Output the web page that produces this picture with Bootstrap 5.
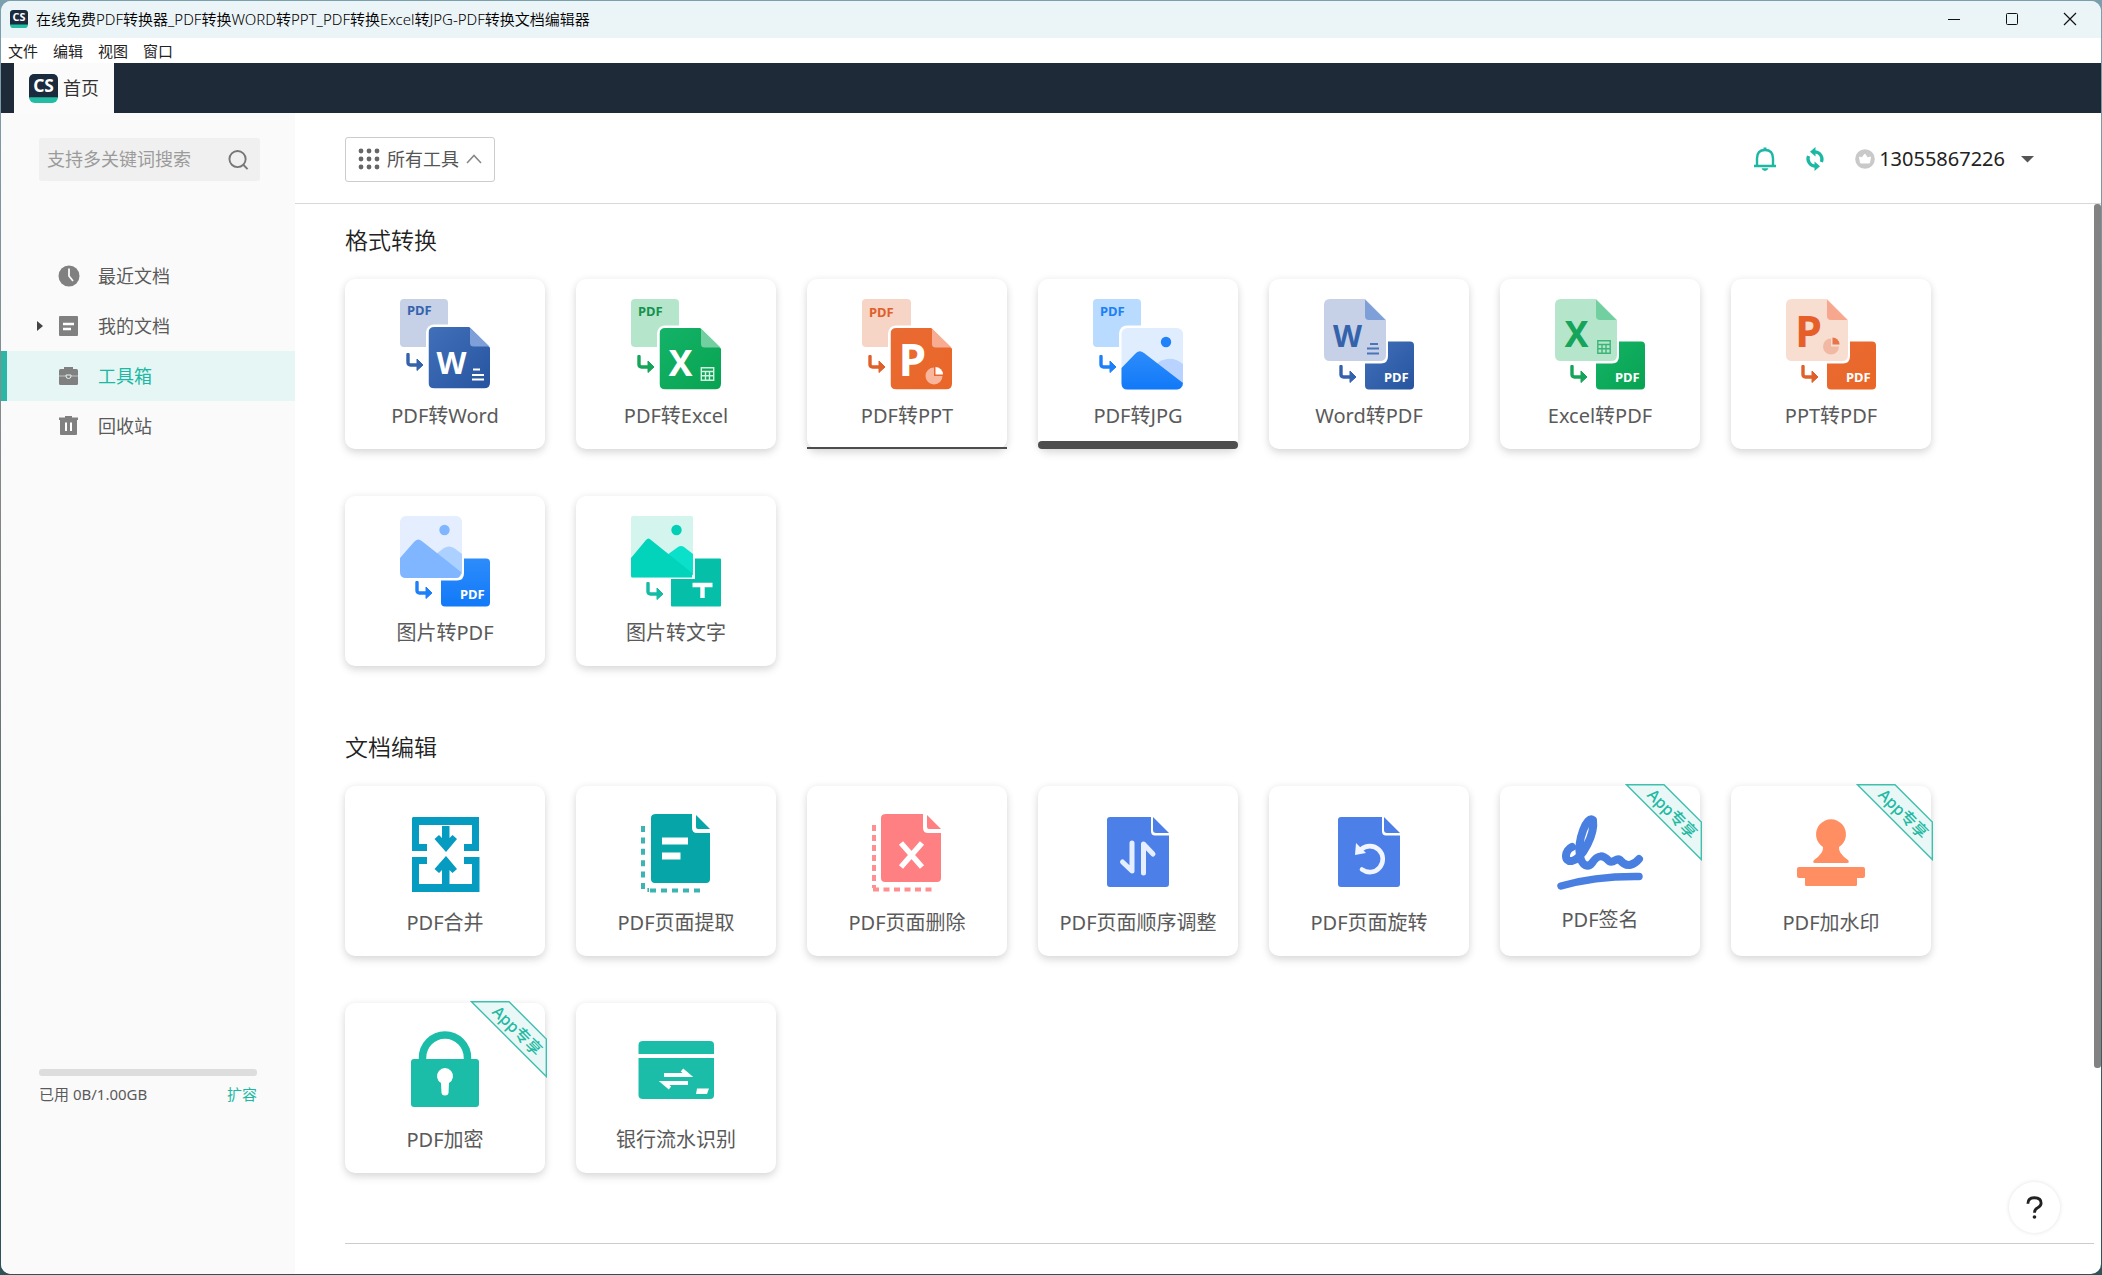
<!DOCTYPE html>
<html lang="zh-CN">
<head>
<meta charset="utf-8">
<meta name="viewport" content="width=device-width, initial-scale=1">
<title>在线免费PDF转换器</title>
<link href="https://cdn.jsdelivr.net/npm/bootstrap@5.3.0/dist/css/bootstrap.min.css" rel="stylesheet">
<style>
  :root { --teal: #1bb9a4; --navy: #1f2a39; --ink: #5a5a5a; }
  html, body { height: 100%; }
  body {
    font-family: "Noto Sans", "Noto Sans CJK SC", sans-serif;
    font-weight: 400;
    color: var(--ink);
    background: linear-gradient(#7aa0ae, #858585 40%, #2f5258 92%);
    padding: 1px;
    overflow: hidden;
  }
  svg { display: block; flex: none; }
  .app-window { border-radius: 10px; background: #fff; }
  .title-bar { background: #ebf4f7; height: 37px; font-size: 15px; font-weight: 350; line-height: 20px; color: #000; padding: 0 2px 2px 9px; }
  .win-btn { width: 58px; background: none; border: 0; padding: 0; color: #111; }
  .menu-strip { height: 25px; padding-left: 7px; gap: 15px; font-size: 15px; line-height: 26px; }
  .menu-strip a { color: #222; text-decoration: none; }
  .tab-strip { height: 50px; background: var(--navy); padding-left: 13px; }
  .home-tab { width: 100px; background: #fbfbfb; color: #333; font-size: 18px; text-decoration: none; gap: 5px; padding-left: 15px; }
  .side-pane { width: 294px; background: #fafafa; padding-top: 25px; }
  .search-box { height: 43px; background: #f0f0f0; border-radius: 3px; margin: 0 35px 70px 38px; padding: 0 11px 0 8px; }
  .search-box input { border: 0; background: none; outline: 0; min-width: 0; width: 100%; padding: 0; font-size: 18px; color: #555; }
  .search-box input::placeholder { color: #9b9b9b; opacity: 1; }
  .search-box button { border: 0; background: none; padding: 0; color: #777; }
  .side-link { height: 50px; font-size: 18px; color: #5a5a5a; text-decoration: none; border-left: 6px solid transparent; padding-left: 29px; }
  .side-link.current { background: #e6f6f5; border-color: #2ab7a6; color: var(--teal); }
  .side-arrow { width: 22px; }
  .side-glyph { width: 40px; color: #808080; }
  .quota { margin: auto 38px 169px 38px; font-size: 15px; line-height: 22px; }
  .quota .progress { height: 7px; border-radius: 3px; background: #ddd; margin-bottom: 7px; }
  .quota a { color: var(--teal); text-decoration: none; }
  .top-bar { height: 91px; border-bottom: 1px solid #d8d8d8; padding: 2px 67px 0 50px; }
  .all-tools { width: 150px; height: 45px; border: 1px solid #ccc; border-radius: 3px; background: #fff; color: #555; font-size: 18px; padding: 0 12px; gap: 7px; }
  .tool-btn { border: 0; background: none; padding: 0; color: var(--teal); }
  .account { border: 0; background: none; padding: 0; color: #222; font-size: 20px; margin-left: 6px; }
  .work-area { padding: 21px 7px 0 50px; }
  .group-title { font-size: 23px; line-height: 30px; font-weight: 350; color: #222; margin-bottom: 24px; }
  .tool-grid { gap: 47px 31px; margin-bottom: 66px; }
  .tool-card { width: 200px; height: 170px; border-radius: 10px; background: #fff; box-shadow: 0 4px 9px rgba(0,0,0,.13), 0 0 8px rgba(0,0,0,.05);
    color: var(--ink); text-decoration: none; font-size: 20px; line-height: 30px; padding-top: 20px; gap: 12px; }
  .tool-card.line-thin::after, .tool-card.line-thick::after { content: ""; position: absolute; left: 0; right: 0; bottom: 0; background: #4d4d4d; }
  .tool-card.line-thin::after { height: 2px; }
  .tool-card.line-thick::after { height: 8px; border-radius: 4px; }
  .ribbon { position: absolute; top: -2px; right: -2px; }
  .glyph text { font-weight: 700; }
  .end-rule { border-top: 1px solid #ccc; margin-top: 70px; }
  .scroll-thumb { position: absolute; top: 91px; right: 0; width: 7px; bottom: 206px; border-radius: 3px; background: #828282; }
  .help-btn { position: absolute; right: 41px; bottom: 41px; width: 51px; height: 51px; border-radius: 50%; border: 0; background: #fff; box-shadow: 0 0 4px rgba(0,0,0,.12); color: #222; padding: 0; }
</style>
<script src="https://cdn.jsdelivr.net/npm/bootstrap@5.3.0/dist/js/bootstrap.bundle.min.js"></script>
</head>
<body>
<svg width="0" height="0" class="position-absolute">
  <defs>
    <linearGradient id="gBlue" x1="0" y1="0" x2="1" y2="1"><stop offset="0" stop-color="#4170b9"/><stop offset="1" stop-color="#27549f"/></linearGradient>
    <linearGradient id="gGreen" x1="0" y1="0" x2="1" y2="1"><stop offset="0" stop-color="#14b368"/><stop offset="1" stop-color="#08a351"/></linearGradient>
    <linearGradient id="gOrange" x1="0" y1="0" x2="1" y2="1"><stop offset="0" stop-color="#e96a33"/><stop offset="1" stop-color="#e96627"/></linearGradient>
    <linearGradient id="gSky" x1="0" y1="0" x2="0" y2="1"><stop offset="0" stop-color="#2d8cfb"/><stop offset="1" stop-color="#1179f8"/></linearGradient>
    <symbol id="hook" viewBox="0 0 18 18"><path d="M3 1.500V9.500Q3 12 5.500 12H13" fill="none" stroke="currentColor" stroke-width="3.400" stroke-linecap="round"/><path d="M12 6L18 12L12 17.500Z" fill="currentColor" stroke="currentColor" stroke-linejoin="round"/></symbol>
    <symbol id="sheet" viewBox="0 0 62 62"><path d="M6 0H41L62 21V56Q62 62 56 62H6Q0 62 0 56V6Q0 0 6 0Z" fill="inherit"/></symbol>
    <symbol id="cells" viewBox="0 0 14 14"><path d="M.8.800H13.200V13.200H.8ZM.8 4.500H13.200M.8 8.800H13.200M5 4.500V13.200M9 4.500V13.200" fill="none" stroke="currentColor" stroke-width="1.400"/></symbol>
    <symbol id="cs" viewBox="0 0 30 30"><rect width="30" height="30" rx="6" fill="#24bda3"/><path d="M6 0H24Q30 0 30 6V24H0V6Q0 0 6 0Z" fill="#1b2a3c"/><text x="15" y="19" text-anchor="middle" font-size="18" font-weight="700" fill="#fff">CS</text></symbol>
    <symbol id="ribbon" viewBox="0 0 77 77"><path d="M1.500.700H39L76.300 38V75.500Z" fill="#e9f8f6" stroke="#3fbfae" stroke-width="1.400"/><text transform="translate(44 33) rotate(45)" y="1" text-anchor="middle" font-size="16" font-weight="500" fill="#22b9a3">App专享</text></symbol>
  </defs>
</svg>

<div class="app-window position-relative d-flex flex-column h-100 overflow-hidden">
  <header class="title-bar d-flex align-items-center flex-shrink-0">
    <svg width="18" height="18" viewBox="0 0 30 30" overflow="visible" class="me-2"><rect width="30" height="30" rx="6" fill="#24bda3"/><path d="M6 0H24Q30 0 30 6V24H0V6Q0 0 6 0Z" fill="#1b2a3c"/><text x="15" y="19" text-anchor="middle" font-size="18" font-weight="700" fill="#fff">CS</text></svg>
    <span class="flex-grow-1 text-nowrap">在线免费PDF转换器_PDF转换WORD转PPT_PDF转换Excel转JPG-PDF转换文档编辑器</span>
    <div class="d-flex h-100">
      <button class="win-btn d-flex align-items-center justify-content-center" aria-label="最小化"><svg width="14" height="14"><path d="M1 7.500H13" stroke="currentColor"/></svg></button>
      <button class="win-btn d-flex align-items-center justify-content-center" aria-label="最大化"><svg width="14" height="14"><rect x="1.500" y="1.500" width="11" height="11" rx="1" fill="none" stroke="currentColor"/></svg></button>
      <button class="win-btn d-flex align-items-center justify-content-center" aria-label="关闭"><svg width="14" height="14"><path d="M1 1L13 13M13 1L1 13" stroke="currentColor" stroke-width="1.200"/></svg></button>
    </div>
  </header>

  <nav class="menu-strip d-flex flex-shrink-0">
    <a href="#">文件</a><a href="#">编辑</a><a href="#">视图</a><a href="#">窗口</a>
  </nav>

  <div class="tab-strip d-flex flex-shrink-0">
    <a href="#" class="home-tab d-flex align-items-center"><svg width="29" height="29"><use href="#cs" width="29" height="29"/></svg>首页</a>
  </div>

  <div class="d-flex flex-grow-1 overflow-hidden position-relative">
    <aside class="side-pane d-flex flex-column flex-shrink-0">
      <form class="search-box d-flex align-items-center" onsubmit="return false">
        <input type="text" placeholder="支持多关键词搜索" aria-label="搜索">
        <button aria-label="搜索"><svg width="21" height="22" viewBox="0 0 22 22" fill="none" stroke="currentColor" stroke-width="2"><circle cx="10" cy="10" r="8.500"/><path d="M16 16L20.500 20.500"/></svg></button>
      </form>
      <a href="#" class="side-link d-flex align-items-center"><span class="side-arrow"></span><span class="side-glyph"><svg width="22" height="22"><circle cx="11" cy="11" r="10.500" fill="currentColor"/><path d="M11 3.500V11L15 16" fill="none" stroke="#fafafa" stroke-width="1.800"/></svg></span>最近文档</a>
      <a href="#" class="side-link d-flex align-items-center"><span class="side-arrow"><svg width="8" height="12"><path d="M1 1L7 6L1 11Z" fill="#444"/></svg></span><span class="side-glyph"><svg width="22" height="22"><rect x="1" y="1" width="19" height="20" rx="1" fill="currentColor"/><path d="M5 9H16M5 14H13" stroke="#fff" stroke-width="2.500"/></svg></span>我的文档</a>
      <a href="#" class="side-link current d-flex align-items-center"><span class="side-arrow"></span><span class="side-glyph"><svg width="22" height="22"><path d="M7 5V3H14V5" fill="none" stroke="currentColor" stroke-width="2"/><rect x="1" y="4" width="19" height="16" rx="1.500" fill="currentColor"/><path d="M1 11H8M13 11H20" stroke="#b9c6c5"/><path d="M8 10H13V11Q13 13.500 10.500 13.500T8 11Z" fill="none" stroke="#e6f6f5"/></svg></span>工具箱</a>
      <a href="#" class="side-link d-flex align-items-center"><span class="side-arrow"></span><span class="side-glyph"><svg width="22" height="22"><path d="M1 2.500H7V1H14V2.500H20V5H1Z" fill="currentColor"/><rect x="2" y="4" width="17" height="16" rx="1" fill="currentColor"/><path d="M8 7.500V16M13 7.500V16" stroke="#fff" stroke-width="2"/></svg></span>回收站</a>
      <div class="quota">
        <div class="progress" role="progressbar" aria-label="已用空间"><div class="progress-bar" style="width:0%"></div></div>
        <div class="d-flex justify-content-between"><span>已用 0B/1.00GB</span><a href="#">扩容</a></div>
      </div>
    </aside>

    <main class="flex-grow-1 overflow-hidden">
      <div class="top-bar d-flex align-items-center">
        <button class="all-tools d-flex align-items-center">
          <svg width="22" height="22" viewBox="0 0 22 22" fill="#666"><circle cx="3" cy="3" r="2.400"/><circle cx="11" cy="3" r="2.400"/><circle cx="19" cy="3" r="2.400"/><circle cx="3" cy="11" r="2.400"/><circle cx="11" cy="11" r="2.400"/><circle cx="19" cy="11" r="2.400"/><circle cx="3" cy="19" r="2.400"/><circle cx="11" cy="19" r="2.400"/><circle cx="19" cy="19" r="2.400"/></svg>
          <span class="text-nowrap">所有工具</span>
          <svg width="16" height="10"><path d="M1 9L8 1.500L15 9" fill="none" stroke="#888" stroke-width="1.600"/></svg>
        </button>
        <div class="d-flex align-items-center ms-auto">
          <button class="tool-btn me-4" aria-label="通知"><svg width="24" height="24" viewBox="0 0 24 24" fill="none" stroke="currentColor" stroke-width="2.400"><path d="M4 19V11.500Q4 3 12 3T20 11.500V19"/><path d="M1 19H23"/><path d="M12 .5V3" stroke-width="3"/><path d="M8.500 21.300H15.500Q14.500 24 12 24T8.500 21.300Z" fill="currentColor" stroke="none"/></svg></button>
          <button class="tool-btn me-4 ps-1" aria-label="刷新"><svg width="20" height="24" viewBox="0 0 20 24" fill="none" stroke="currentColor" stroke-width="3.200"><path d="M9 4.800A7.500 7.500 0 0 1 16.500 15M11 19.200A7.500 7.500 0 0 1 3.500 9"/><path d="M10.500 0V9.600L5 4.800ZM9.500 24V14.400L15 19.200Z" fill="currentColor" stroke="none"/></svg></button>
          <button class="account d-flex align-items-center"><svg width="20" height="20" viewBox="0 0 20 20"><circle cx="10" cy="10" r="9.800" fill="#c9c9c9"/><path d="M4.500 8L7 8.800L9.800 5L12.600 8.800L15.500 8L14.500 14H5.500Z" fill="#fff" stroke="#fff" stroke-linejoin="round"/></svg>
            <span class="ms-1">13055867226</span>
            <svg width="13" height="8" class="ms-3"><path d="M0 1H13L6.500 7.500Z" fill="#555"/></svg></button>
        </div>
      </div>

      <div class="work-area">
        <section>
          <h2 class="group-title">格式转换</h2>
          <div class="tool-grid d-flex flex-wrap">
            <a href="#" class="tool-card d-flex flex-column align-items-center position-relative">
              <svg class="glyph" width="90" height="90" viewBox="0 0 90 90" overflow="visible">
                <rect width="48" height="48" rx="4" fill="#c6d1e7"/><text x="7" y="16" font-size="13" fill="#3463ac">PDF</text>
                <rect x="26" y="25.500" width="67" height="67" rx="8" fill="#fff"/>
                <use href="#sheet" x="28.500" y="28" width="61.500" height="61.500" fill="url(#gBlue)"/><path d="M70 28.500V44Q70 47.500 73.500 47.500H89.500Z" fill="#7e9fd8"/>
                <use href="#hook" x="5" y="54" width="18" height="18" color="#3463ac"/>
                <text x="51.500" y="75" font-size="31" text-anchor="middle" fill="#fff">W</text>
                <path d="M73 70.500H80M72 76H84M72 80.500H84" stroke="#fff" stroke-width="1.800"/></svg>
              PDF转Word</a>
            <a href="#" class="tool-card d-flex flex-column align-items-center position-relative">
              <svg class="glyph" width="90" height="90" viewBox="0 0 90 90" overflow="visible">
                <rect width="48" height="48" rx="4" fill="#b5e6cc"/><text x="7" y="17" font-size="13" fill="#16924e">PDF</text>
                <rect x="26" y="26.500" width="67" height="67" rx="8" fill="#fff"/>
                <use href="#sheet" x="28.500" y="29" width="61.500" height="61.500" fill="url(#gGreen)"/><path d="M70 29.500V45Q70 48.500 73.500 48.500H89.500Z" fill="#72d0a0"/>
                <use href="#hook" x="5" y="56" width="18" height="18" color="#14a45a"/>
                <text x="49.500" y="77" font-size="36" text-anchor="middle" fill="#fff">X</text>
                <use href="#cells" x="69" y="68" width="15" height="14" color="#d5f3e3"/></svg>
              PDF转Excel</a>
            <a href="#" class="tool-card line-thin d-flex flex-column align-items-center position-relative">
              <svg class="glyph" width="90" height="90" viewBox="0 0 90 90" overflow="visible">
                <rect width="49" height="48" rx="4" fill="#f6d4c6"/><text x="7" y="18" font-size="13" fill="#e0602a">PDF</text>
                <rect x="26" y="26.500" width="67" height="67" rx="8" fill="#fff"/>
                <use href="#sheet" x="28.500" y="29" width="61.500" height="61.500" fill="url(#gOrange)"/><path d="M70 29.500V45Q70 48.500 73.500 48.500H89.500Z" fill="#f8ad92"/>
                <use href="#hook" x="5" y="56" width="18" height="18" color="#e0602a"/>
                <text x="50.500" y="77" font-size="44" text-anchor="middle" fill="#fff">P</text>
                <path d="M72 77V68.500A8.500 8.500 0 1 0 80.500 77Z" fill="#f9b69d"/><path d="M73.500 75.500V68A7.500 7.500 0 0 1 81 75.500Z" fill="#fff"/></svg>
              PDF转PPT</a>
            <a href="#" class="tool-card line-thick d-flex flex-column align-items-center position-relative">
              <svg class="glyph" width="90" height="90" viewBox="0 0 90 90" overflow="visible">
                <rect width="48" height="48" rx="4" fill="#b9dbff"/><text x="7" y="17" font-size="13" fill="#1d80f8">PDF</text>
                <rect x="26" y="26.500" width="67" height="67" rx="8" fill="#fff"/>
                <rect x="28.500" y="29" width="61.500" height="61.500" rx="6" fill="#e0edff"/>
                <path d="M62 66Q76 54 90 65V87L80 88Z" fill="#b8d3ff"/>
                <path d="M28.500 69L42 55Q46 50 51 54L90 84Q89 90.500 84 90.500H34.500Q28.500 90.500 28.500 84.500Z" fill="url(#gSky)"/><circle cx="73" cy="43" r="5.200" fill="#1f82f9"/>
                <use href="#hook" x="5" y="56" width="18" height="18" color="#1d80f8"/></svg>
              PDF转JPG</a>
            <a href="#" class="tool-card d-flex flex-column align-items-center position-relative">
              <svg class="glyph" width="90" height="90" viewBox="0 0 90 90" overflow="visible">
                <rect x="41" y="42.500" width="49" height="48" rx="4" fill="url(#gBlue)"/><path d="M0 0H64V57Q64 64.500 57 64.500H0Z" fill="#fff"/>
                <use href="#sheet" width="62" height="62" fill="#c6d1e7"/><path d="M41 .5V17Q41 21 45 21H61.500Z" fill="#7e9fd8"/>
                <text x="23.500" y="48" font-size="30" text-anchor="middle" fill="#3463ac">W</text>
                <path d="M46 45H54M43 49.500H55M43 54.500H55" stroke="#4b74b9" stroke-width="1.800"/>
                <use href="#hook" x="14" y="66" width="18" height="18" color="#3463ac"/><text x="60" y="83" font-size="13" fill="#fff">PDF</text></svg>
              Word转PDF</a>
            <a href="#" class="tool-card d-flex flex-column align-items-center position-relative">
              <svg class="glyph" width="90" height="90" viewBox="0 0 90 90" overflow="visible">
                <rect x="41" y="42.500" width="49" height="48" rx="4" fill="url(#gGreen)"/><path d="M0 0H64V57Q64 64.500 57 64.500H0Z" fill="#fff"/>
                <use href="#sheet" width="62" height="62" fill="#b5e6cc"/><path d="M41 .5V17Q41 21 45 21H61.500Z" fill="#72d0a0"/>
                <text x="21.500" y="48" font-size="36" text-anchor="middle" fill="#14a45a">X</text>
                <use href="#cells" x="42" y="41" width="14" height="14" color="#3cb478"/>
                <use href="#hook" x="14" y="66" width="18" height="18" color="#14a45a"/><text x="60" y="83" font-size="13" fill="#fff">PDF</text></svg>
              Excel转PDF</a>
            <a href="#" class="tool-card d-flex flex-column align-items-center position-relative">
              <svg class="glyph" width="90" height="90" viewBox="0 0 90 90" overflow="visible">
                <rect x="41" y="42.500" width="49" height="48" rx="4" fill="url(#gOrange)"/><path d="M0 0H64V57Q64 64.500 57 64.500H0Z" fill="#fff"/>
                <use href="#sheet" width="62" height="62" fill="#f8ddd1"/><path d="M41 .5V17Q41 21 45 21H61.500Z" fill="#f8a78f"/>
                <text x="22.500" y="48" font-size="43" text-anchor="middle" fill="#e65f28">P</text>
                <path d="M45 47.500V39.500A8 8 0 1 0 53 47.500Z" fill="#f1b9a3"/><path d="M46.500 45.500V38.500A7 7 0 0 1 53.500 45.500Z" fill="#e97445"/>
                <use href="#hook" x="14" y="66" width="18" height="18" color="#e0602a"/><text x="60" y="83" font-size="13" fill="#fff">PDF</text></svg>
              PPT转PDF</a>
            <a href="#" class="tool-card d-flex flex-column align-items-center position-relative">
              <svg class="glyph" width="90" height="90" viewBox="0 0 90 90" overflow="visible">
                <rect x="41" y="42.500" width="49" height="48" rx="4" fill="url(#gSky)"/><path d="M0 0H64V57Q64 64.500 57 64.500H0Z" fill="#fff"/>
                <rect width="62" height="62" rx="6" fill="#e4eeff"/>
                <path d="M36 38L44 32Q49 29 54 32L62 38V58L50 56Z" fill="#acd0ff"/>
                <path d="M0 42L14 26Q18 21 23 26L61 56Q61 62 56 62H6Q0 62 0 56Z" fill="#80b5ff"/><circle cx="44.500" cy="14" r="5.200" fill="#80b5ff"/>
                <use href="#hook" x="14" y="65" width="18" height="18" color="#1d80f8"/><text x="60" y="83" font-size="13" fill="#fff">PDF</text></svg>
              图片转PDF</a>
            <a href="#" class="tool-card d-flex flex-column align-items-center position-relative">
              <svg class="glyph" width="90" height="90" viewBox="0 0 90 90" overflow="visible">
                <rect x="40" y="42.500" width="50" height="48" rx="1" fill="#05bfa9"/><path d="M0 0H64V63H0Z" fill="#fff"/>
                <rect width="62" height="61.500" rx="2" fill="#d3f5ee"/>
                <path d="M36 39L47 31Q50 29 53 31L62 38V59L50 56Z" fill="#0be0cb"/>
                <path d="M0 42L15 24Q17.500 21 20 24L61 57V61.500H1.500Q0 61.500 0 60Z" fill="#02d3bb"/><circle cx="45.500" cy="14" r="5.200" fill="#02cfb6"/>
                <use href="#hook" x="14" y="66" width="18" height="18" color="#15bba5"/><path d="M61.500 69H81.500M71.500 69V82" stroke="#fff" stroke-width="4.400" fill="none"/></svg>
              图片转文字</a>
          </div>
        </section>

        <section>
          <h2 class="group-title">文档编辑</h2>
          <div class="tool-grid d-flex flex-wrap mb-0">
            <a href="#" class="tool-card d-flex flex-column align-items-center position-relative">
              <svg width="90" height="90" viewBox="0 0 90 90" fill="#069bc0"><path d="M13 11H79V45H64V38H72V19H19V38H27V45H12V12Z"/><path d="M12 51H27V58H19V78H72V58H64V51H79.500V86H12Z"/><path d="M42 20H49.500V32L52.500 29L57 33L46 46L34.500 33L39 29L42 32ZM42 78H49.500V64L52.500 67L57 63L46 50L34.500 63L39 67L42 64Z"/></svg>
              PDF合并</a>
            <a href="#" class="tool-card d-flex flex-column align-items-center position-relative">
              <svg width="90" height="90" viewBox="0 0 90 90" fill="#05a5a8"><path d="M25 8H61V22Q61 27 66 27H79V73Q79 77 75 77H24Q20 77 20 73V12Q20 8 25 8Z"/><path d="M65 9L79 23H67Q65 23 65 21Z"/><path d="M31 35H57M31 50H49.500" stroke="#fff" stroke-width="7"/><path d="M12 20V84H18" fill="none" stroke="#3db4b4" stroke-width="4" stroke-dasharray="6 5.400"/><path d="M19 84.500H71" stroke="#3db4b4" stroke-width="4" stroke-dasharray="6 5"/></svg>
              PDF页面提取</a>
            <a href="#" class="tool-card d-flex flex-column align-items-center position-relative">
              <svg width="90" height="90" viewBox="0 0 90 90" fill="#ff8082"><path d="M24 8H61V22Q61 27 66 27H79V72Q79 76 75 76H23Q19 76 19 72V12Q19 8 24 8Z"/><path d="M65 9L79 23H67Q65 23 65 21Z"/><path d="M39 37L60 61M60 37L39 61" stroke="#fff" stroke-width="5.500"/><path d="M12 19V82" stroke="#ff8f90" stroke-width="4" stroke-dasharray="6 4"/><path d="M11 83.500H72" stroke="#ff8f90" stroke-width="4" stroke-dasharray="6 4.500"/></svg>
              PDF页面删除</a>
            <a href="#" class="tool-card d-flex flex-column align-items-center position-relative">
              <svg width="90" height="90" viewBox="0 0 90 90" fill="#4c80e8"><path d="M17 11H58V25Q58 29.500 62 29.500H76V78Q76 81 73 81H17Q14 81 14 78V14Q14 11 17 11Z"/><path d="M60 11L76 27H63Q60 27 60 24Z"/><path d="M39 37V65L29.500 56M50.500 67V38L60 48" fill="none" stroke="#e6efff" stroke-width="5" stroke-linecap="round" stroke-linejoin="round"/></svg>
              PDF页面顺序调整</a>
            <a href="#" class="tool-card d-flex flex-column align-items-center position-relative">
              <svg width="90" height="90" viewBox="0 0 90 90" fill="#4c80e8"><path d="M17 11H58V25Q58 29.500 62 29.500H76V78Q76 81 73 81H17Q14 81 14 78V14Q14 11 17 11Z"/><path d="M60 11L76 27H63Q60 27 60 24Z"/><path d="M37 43.500A13 13 0 1 1 38 63.500" fill="none" stroke="#f0f5ff" stroke-width="4.600" stroke-linecap="round"/><path d="M32 37L42 47L31 49Z" fill="#f0f5ff"/></svg>
              PDF页面旋转</a>
            <a href="#" class="tool-card d-flex flex-column align-items-center position-relative">
              <svg width="90" height="87" viewBox="0 0 90 87" fill="none" stroke="#4a7fe2" stroke-width="7.500" stroke-linecap="round" stroke-linejoin="round"><path d="M6 80Q40 70 84 70.500"/><path d="M17 41C10 44 8 56 17 55C28 52 40 28 38 14C32 9 22 34 25 50C27 60 33 62 37 57C43 48 48 49 54 55C59 58 61 51 65 54C72 63 80 58 84 53" stroke-width="8"/></svg>
              PDF签名
              <svg class="ribbon" width="77" height="77"><use href="#ribbon"/></svg></a>
            <a href="#" class="tool-card d-flex flex-column align-items-center position-relative">
              <svg width="90" height="90" viewBox="0 0 90 90" fill="#ff8f63"><path d="M37 41A15 15 0 1 1 53 41Q52 47 62 54Q64 57 61 57H29Q26 57 28 54Q38 47 37 41Z"/><rect x="11" y="61" width="68" height="11" rx="2"/><rect x="19" y="70" width="52" height="10" rx="1.500"/></svg>
              PDF加水印
              <svg class="ribbon" width="77" height="77"><use href="#ribbon"/></svg></a>
            <a href="#" class="tool-card d-flex flex-column align-items-center position-relative">
              <svg width="90" height="90" viewBox="0 0 90 90" fill="#1cbda8"><rect x="11" y="36" width="68" height="48" rx="3"/><path d="M22.500 37V35A22.500 23 0 0 1 67.500 35V37" fill="none" stroke="#1cbda8" stroke-width="7.500"/><path d="M41 60A8 8 0 1 1 49 60L48.500 70Q48 72.500 45 72.500T41.500 70Z" fill="#fff"/></svg>
              PDF加密
              <svg class="ribbon" width="77" height="77"><use href="#ribbon"/></svg></a>
            <a href="#" class="tool-card d-flex flex-column align-items-center position-relative">
              <svg width="90" height="90" viewBox="0 0 90 90" fill="#1cbda8"><path d="M12 18H79Q83 18 83 22V31H7.500V22Q7.500 18 12 18Z"/><path d="M7.500 35H83V72Q83 76 79 76H12Q7.500 76 7.500 72Z"/><path d="M33 52H57L51 47M57 60H33L39 65" fill="none" stroke="#fff" stroke-width="3.800"/><path d="M66 65.500H78L76 71H65Z" fill="#fff"/></svg>
              银行流水识别</a>
          </div>
          <div class="end-rule"></div>
        </section>
      </div>
    </main>
    <div class="scroll-thumb"></div>
    <button class="help-btn d-flex align-items-center justify-content-center" aria-label="帮助"><svg width="17" height="23" viewBox="0 0 18 24" fill="none" stroke="currentColor" stroke-width="3"><path d="M2 8Q2 1.700 9 1.700T16 7.500Q16 10.500 12 12.500Q9 14 9 17.500"/><circle cx="9" cy="22" r="1.900" fill="currentColor" stroke="none"/></svg></button>
  </div>
</div>
</body>
</html>
